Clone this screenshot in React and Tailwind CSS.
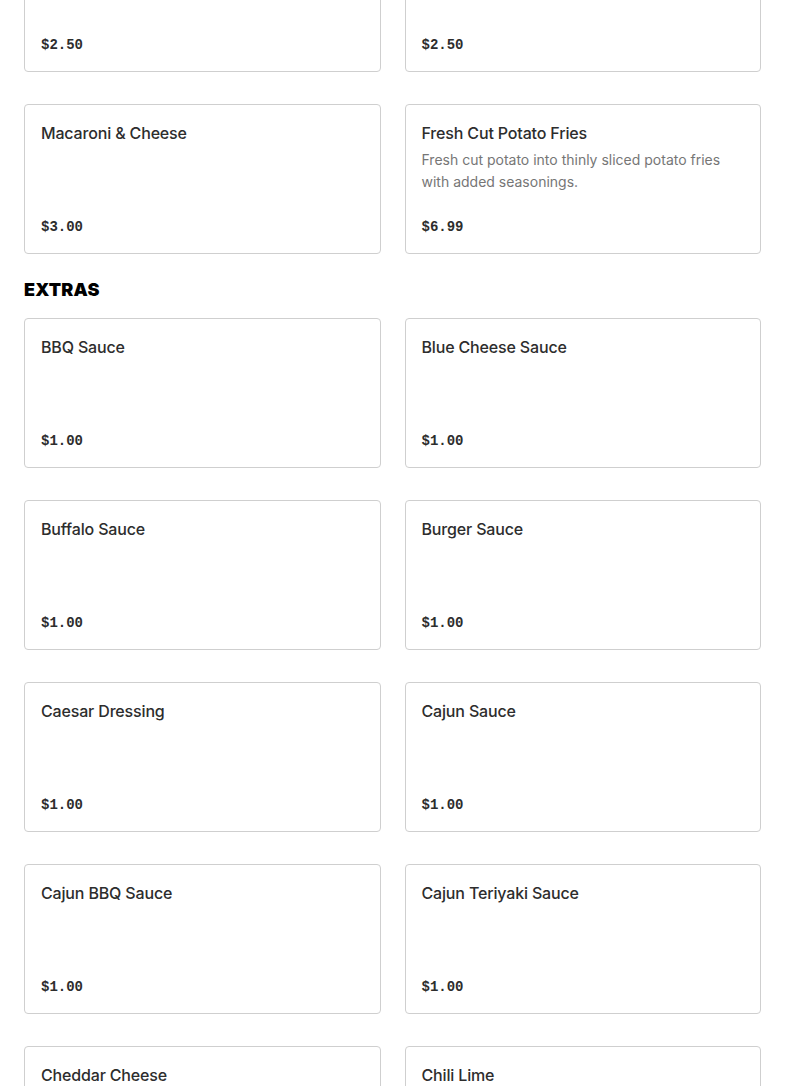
import React from "react";

const sides = [
  { id: 1, name: "Side Salad", price: "$2.50" },
  { id: 2, name: "Coleslaw", price: "$2.50" },
  { id: 3, name: "Macaroni & Cheese", price: "$3.00" },
  {
    id: 4,
    name: "Fresh Cut Potato Fries",
    desc: "Fresh cut potato into thinly sliced potato fries with added seasonings.",
    price: "$6.99",
  },
];

const extras = [
  "BBQ Sauce",
  "Blue Cheese Sauce",
  "Buffalo Sauce",
  "Burger Sauce",
  "Caesar Dressing",
  "Cajun Sauce",
  "Cajun BBQ Sauce",
  "Cajun Teriyaki Sauce",
  "Cheddar Cheese",
  "Chili Lime",
].map((name, i) => ({ id: i + 1, name, price: "$1.00" }));

function Card({ item }) {
  return (
    <div className="h-[150px] flex flex-col justify-between rounded-[4px] border border-[#cfcfcf] bg-white p-4">
      <div>
        <h3 className="text-[16px] leading-6 font-medium tracking-[-0.01em] text-[#2d2d2d]">{item.name}</h3>
        {item.desc && (
          <p className="mt-[4px] pr-4 text-[14px] leading-[22px] text-[#767676]">{item.desc}</p>
        )}
      </div>
      <span className="text-[14px] leading-5 font-bold text-[#2d2d2d] font-['Liberation_Mono',monospace]">
        {item.price}
      </span>
    </div>
  );
}

export default function App() {
  return (
    <div className="min-h-screen bg-white overflow-hidden font-['Inter',sans-serif]">
      <div className="px-6 -mt-[78px]">
        <div className="grid grid-cols-2 gap-x-6 gap-y-8">
          {sides.map((item) => (
            <Card key={item.id} item={item} />
          ))}
        </div>

        <h2 className="mt-[24px] mb-[16px] text-[18px] leading-6 font-black tracking-[0.01em] text-black uppercase">
          Extras
        </h2>

        <div className="grid grid-cols-2 gap-x-6 gap-y-8 pb-10">
          {extras.map((item) => (
            <Card key={item.id} item={item} />
          ))}
        </div>
      </div>
    </div>
  );
}
